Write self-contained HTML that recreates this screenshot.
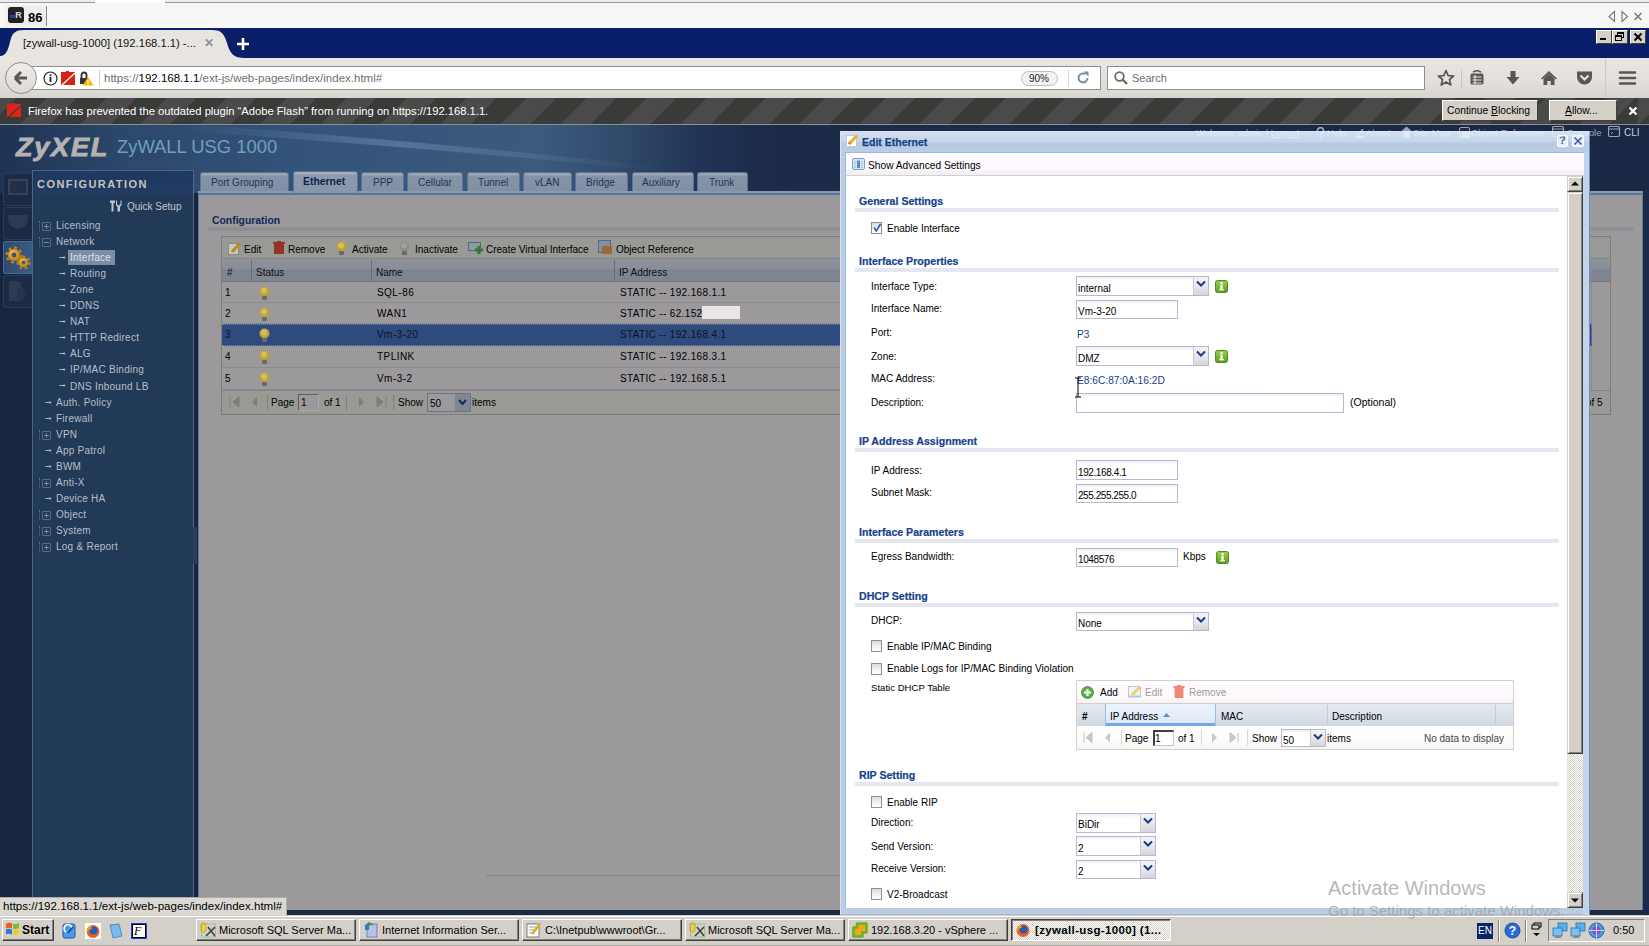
<!DOCTYPE html>
<html><head><meta charset="utf-8">
<style>
*{margin:0;padding:0;box-sizing:border-box}
html,body{width:1649px;height:946px;overflow:hidden;background:#9c999c;font-family:"Liberation Sans",sans-serif;font-size:11px;color:#000}
.a{position:absolute}
.t{position:absolute;white-space:nowrap;line-height:1}
</style></head><body>
<!-- ===== top strip ===== -->
<div class="a" style="left:0;top:0;width:1649px;height:28px;background:#f7f7f7"></div>
<div class="a" style="left:0;top:0;width:1649px;height:3px;background:#ececec;border-bottom:1px solid #9a9a9a"></div>
<div class="a" style="left:95px;top:0;width:70px;height:3px;background:#fff"></div>
<div class="a" style="left:5px;top:5px;width:41px;height:21px;background:#efefef"></div>
<div class="a" style="left:8px;top:7px;width:16px;height:16px;background:#222;border-radius:3px"></div>
<div class="t" style="left:10px;top:11px;font-size:9px;font-weight:bold;color:#ddd"><span style="color:#2b5fd0;font-size:6px">m</span>R</div>
<div class="t" style="left:28px;top:11px;font-size:13px;color:#000;font-weight:bold">86</div>
<div class="a" style="left:46px;top:6px;width:1px;height:20px;background:#888"></div>
<svg class="a" style="left:1606px;top:10px" width="42" height="13"><path d="M8.5,1.5V11.5L3,6.5Z" fill="none" stroke="#777" stroke-width="1.1"/><path d="M16,1.5V11.5L21.5,6.5Z" fill="none" stroke="#777" stroke-width="1.1"/><path d="M28.5,3L35.5,10M35.5,3L28.5,10" stroke="#777" stroke-width="1.5"/></svg>
<!-- ===== firefox tab strip ===== -->
<div class="a" style="left:0;top:28px;width:1649px;height:30px;background:#0a1f6a"></div>
<svg class="a" style="left:0;top:28px" width="245" height="31"><path d="M0,31 L0,28 C6,28 8,22 10,14 C12,5 15,2 24,2 L212,2 C222,2 224,6 227,15 C230,26 234,30 245,30 L245,31 Z" fill="#e8e5e1"/></svg>
<div class="t" style="left:23px;top:38px;font-size:11.2px;color:#111">[zywall-usg-1000] (192.168.1.1) -...</div>
<div class="t" style="left:204px;top:37px;font-size:12px;font-weight:bold;color:#8a9096">&#10005;</div>
<svg class="a" style="left:236px;top:37px" width="14" height="14"><path d="M7,1V13M1,7H13" stroke="#fff" stroke-width="2.6"/></svg>
<!-- window buttons -->
<div class="a" style="left:1596px;top:30px;width:16px;height:14px;background:#d4d0c8;border:1px solid;border-color:#fff #404040 #404040 #fff"></div>
<div class="a" style="left:1600px;top:38px;width:6px;height:2px;background:#000"></div>
<div class="a" style="left:1612px;top:30px;width:16px;height:14px;background:#d4d0c8;border:1px solid;border-color:#fff #404040 #404040 #fff"></div>
<div class="a" style="left:1617px;top:32px;width:7px;height:6px;border:1px solid #000;border-top-width:2px"></div>
<div class="a" style="left:1615px;top:35px;width:7px;height:6px;border:1px solid #000;border-top-width:2px;background:#d4d0c8"></div>
<div class="a" style="left:1630px;top:30px;width:16px;height:14px;background:#d4d0c8;border:1px solid;border-color:#fff #404040 #404040 #fff"></div>
<svg class="a" style="left:1630px;top:30px" width="16" height="14"><path d="M4.5,3.5L11.5,10.5M11.5,3.5L4.5,10.5" stroke="#000" stroke-width="2"/></svg>
<!-- ===== toolbar ===== -->
<div class="a" style="left:0;top:58px;width:1649px;height:40px;background:linear-gradient(#e9e6e2,#e3dfda 60%,#d8d5d0)"></div>
<div class="a" style="left:1605px;top:58px;width:1px;height:40px;background:#cfccc7"></div>
<!-- url field -->
<div class="a" style="left:30px;top:66px;width:1071px;height:24px;background:#fff;border:1px solid #8e8e8e;border-radius:0"></div>
<div class="a" style="left:5px;top:62px;width:32px;height:32px;border-radius:50%;background:linear-gradient(#f0eeea,#dcd9d4);border:1px solid #8f8f8f"></div>
<svg class="a" style="left:13px;top:70px" width="16" height="16"><path d="M2,8 L8,2 M2,8 L8,14 M2,8 H14" stroke="#5a574f" stroke-width="3" fill="none"/></svg>
<svg class="a" style="left:43px;top:71px" width="15" height="15"><circle cx="7.5" cy="7.5" r="6.5" stroke="#222" stroke-width="1.2" fill="#fff"/><rect x="6.6" y="6" width="1.8" height="5" fill="#222"/><rect x="6.6" y="3.3" width="1.8" height="1.8" fill="#222"/></svg>
<svg class="a" style="left:61px;top:71px" width="15" height="14"><path d="M0,1H5V0H8V1H14V14H0Z" fill="#d92115"/><path d="M1,14L14,2" stroke="#fff" stroke-width="1.3"/></svg>
<svg class="a" style="left:79px;top:70px" width="15" height="16"><path d="M1,8V14H9V8Z" fill="#333"/><path d="M2.5,8V5A2.5,2.5 0 0 1 7.5,5V8" stroke="#333" stroke-width="1.8" fill="none"/><path d="M9,7L14.5,15.5H3.5Z" fill="#fbb600"/><rect x="8.4" y="10" width="1.2" height="3" fill="#fff"/><rect x="8.4" y="13.6" width="1.2" height="1" fill="#fff"/></svg>
<div class="a" style="left:99px;top:70px;width:1px;height:16px;background:#ccc"></div>
<div class="t" style="left:104px;top:73px;font-size:11.5px;color:#6f6f6f">https://<span style="color:#000">192.168.1.1</span>/ext-js/web-pages/index/index.html#</div>
<div class="a" style="left:1021px;top:71px;width:37px;height:15px;border:1px solid #bdbdbd;border-radius:8px;background:#f3f3f3"></div>
<div class="t" style="left:1029px;top:74px;font-size:10px;color:#222">90%</div>
<div class="a" style="left:1068px;top:70px;width:1px;height:17px;background:#d5d5d5"></div>
<svg class="a" style="left:1075px;top:70px" width="16" height="16"><path d="M12.5,8A4.5,4.5 0 1 1 10.5,4.2" stroke="#7890a4" stroke-width="2" fill="none"/><path d="M8.5,1.5H13.5V6.5Z" fill="#7890a4"/></svg>
<!-- search -->
<div class="a" style="left:1107px;top:66px;width:318px;height:24px;background:#fff;border:1px solid #8e8e8e;border-radius:0"></div>
<svg class="a" style="left:1113px;top:70px" width="16" height="16"><circle cx="6.5" cy="6.5" r="4.3" stroke="#6a6a6a" stroke-width="1.8" fill="none"/><path d="M9.5,9.5L14,14" stroke="#6a6a6a" stroke-width="2.4"/></svg>
<div class="t" style="left:1132px;top:73px;font-size:11px;color:#6d6d6d">Search</div>
<!-- toolbar icons -->
<svg class="a" style="left:1437px;top:69px" width="18" height="18"><path d="M9,1.5L11.2,6.6L16.6,7L12.5,10.5L13.8,16L9,13L4.2,16L5.5,10.5L1.4,7L6.8,6.6Z" stroke="#595750" stroke-width="1.7" fill="none" stroke-linejoin="round"/></svg>
<div class="a" style="left:1461px;top:70px;width:1px;height:17px;background:#c9c6c1"></div>
<svg class="a" style="left:1469px;top:70px" width="16" height="16"><rect x="1.5" y="3.5" width="13" height="11" rx="1.5" fill="#595750"/><path d="M4,2L8,0.5L12,2" stroke="#595750" stroke-width="1.5" fill="none"/><path d="M3.5,7H12.5M3.5,10H12.5M3.5,13H12.5M6,5V14" stroke="#e6e3df" stroke-width="1.2"/></svg>
<svg class="a" style="left:1505px;top:70px" width="16" height="16"><path d="M5.5,1H10.5V7H14.5L8,14.5L1.5,7H5.5Z" fill="#595750"/></svg>
<svg class="a" style="left:1540px;top:70px" width="18" height="16"><path d="M9,1L17,8.5L15.8,9.6L9,3.4L2.2,9.6L1,8.5Z" fill="#595750"/><path d="M3.5,8.5L9,3.8L14.5,8.5V15H10.7V11H7.3V15H3.5Z" fill="#595750"/></svg>
<svg class="a" style="left:1576px;top:70px" width="17" height="16"><path d="M1,1.5H16V7A7.5,7.5 0 0 1 1,7Z" fill="#595750"/><path d="M4.5,5.5L8.5,9.5L12.5,5.5" stroke="#e6e3df" stroke-width="2.2" fill="none"/></svg>
<svg class="a" style="left:1618px;top:70px" width="19" height="16"><path d="M2,2.5H17M2,8H17M2,13.5H17" stroke="#595750" stroke-width="2.6" stroke-linecap="round"/></svg>
<!-- ===== notification bar ===== -->
<div class="a" style="left:0;top:98px;width:1649px;height:27px;background:repeating-linear-gradient(-45deg,#393b38 0 21.19px,#4a4a4a 21.19px 42.38px) -11px 0"></div>
<div class="a" style="left:0;top:124px;width:1649px;height:1px;background:#8d8f92"></div>
<svg class="a" style="left:7px;top:103px" width="15" height="15"><path d="M0,1H5V0H8V1H14V14H0Z" fill="#e0231a"/><path d="M1,14.5L14,2.5" stroke="#3d3e3c" stroke-width="1.3"/></svg>
<div class="t" style="left:28px;top:106px;font-size:11.2px;color:#fff">Firefox has prevented the outdated plugin “Adobe Flash” from running on https://192.168.1.1.</div>
<div class="a" style="left:1442px;top:100px;width:96px;height:21px;background:#d4d0c8;border:1px solid;border-color:#fff #404040 #404040 #fff"></div>
<div class="t" style="left:1447px;top:106px;font-size:10.3px;color:#000">Continue <u>B</u>locking</div>
<div class="a" style="left:1549px;top:100px;width:68px;height:21px;background:#d4d0c8;border:1px solid;border-color:#fff #404040 #404040 #fff"></div>
<div class="t" style="left:1565px;top:106px;font-size:10.3px;color:#000"><u>A</u>llow...</div>
<svg class="a" style="left:1628px;top:106px" width="10" height="10"><path d="M1.5,1.5L8.5,8.5M8.5,1.5L1.5,8.5" stroke="#fff" stroke-width="2.4"/></svg>
<!-- ===== zyxel page ===== -->
<div class="a" style="left:0;top:125px;width:1649px;height:790px;background:#1b2a47"></div>
<!-- header gradient -->
<div class="a" style="left:0;top:125px;width:1649px;height:68px;background:linear-gradient(90deg,#1f3353 0px,#2b476a 120px,#34537a 300px,#3c5a7d 540px,#304a6b 620px,#22365a 690px,#1c2b49 760px,#1a2846 1649px)"></div>
<svg class="a" style="left:0;top:125px" width="900" height="68"><defs><linearGradient id="sw" x1="0" y1="0" x2="1" y2="0"><stop offset="0" stop-color="#8fb0d0" stop-opacity="0"/><stop offset="0.45" stop-color="#9ab8d6" stop-opacity="0.3"/><stop offset="1" stop-color="#8fb0d0" stop-opacity="0"/></linearGradient></defs><path d="M200,0 C340,10 500,24 660,42 L660,46 C500,30 340,16 180,6 Z" fill="url(#sw)"/></svg>
<div class="t" style="left:16px;top:134px;font-size:27px;font-weight:bold;font-style:italic;color:#b4b3b1;letter-spacing:1.8px;-webkit-text-stroke:0.9px #b4b3b1;transform:scaleY(0.93);transform-origin:0 100%">ZyXEL</div>
<div class="t" style="left:117px;top:138px;font-size:18.4px;color:#70a0b9">ZyWALL USG 1000</div>
<!-- left icon strip -->
<div class="a" style="left:0;top:193px;width:32px;height:717px;background:#172640"></div>
<div class="a" style="left:3px;top:173px;width:29px;height:33px;background:#1d2a46;border:1px solid #2c3b57;border-right:0;border-radius:3px 0 0 3px"></div>
<div class="a" style="left:8px;top:179px;width:20px;height:16px;border:2px solid #34435c;background:#232f48"></div>
<div class="a" style="left:3px;top:207px;width:29px;height:33px;background:#1d2a46;border:1px solid #2c3b57;border-right:0;border-radius:3px 0 0 3px"></div>
<div class="a" style="left:8px;top:215px;width:20px;height:14px;border-radius:0 0 10px 10px;background:#2c3a52"></div>
<div class="a" style="left:3px;top:241px;width:30px;height:33px;background:linear-gradient(90deg,#2f4a70,#3b5b84);border:1px solid #4d6a90;border-right:0;border-radius:3px 0 0 3px"></div>
<svg class="a" style="left:4px;top:245px" width="28" height="26"><defs><radialGradient id="gg" cx="0.4" cy="0.35" r="0.7"><stop offset="0" stop-color="#f2c24a"/><stop offset="1" stop-color="#b27a18"/></radialGradient></defs><circle cx="10" cy="10" r="6.8" fill="none" stroke="#c08a20" stroke-width="3.2" stroke-dasharray="2.6 2.74"/><circle cx="10" cy="10" r="6.2" fill="url(#gg)" stroke="#8a5a10" stroke-width="0.6"/><circle cx="10" cy="10" r="2.4" fill="#35527a"/><circle cx="19.5" cy="17.5" r="5.6" fill="none" stroke="#c08a20" stroke-width="2.8" stroke-dasharray="2.3 2.7"/><circle cx="19.5" cy="17.5" r="5" fill="url(#gg)" stroke="#8a5a10" stroke-width="0.6"/><circle cx="19.5" cy="17.5" r="1.9" fill="#3a5a84"/></svg>
<div class="a" style="left:3px;top:275px;width:29px;height:33px;background:#1d2a46;border:1px solid #2c3b57;border-right:0;border-radius:3px 0 0 3px"></div>
<div class="a" style="left:9px;top:281px;width:12px;height:20px;background:#2c3a52;border-radius:3px 3px 0 0"></div>
<div class="a" style="left:17px;top:288px;width:9px;height:12px;background:#26334b;border-radius:0 5px 5px 0"></div>
<!-- sidebar panel -->
<div class="a" style="left:32px;top:170px;width:162px;height:740px;background:#213a58;border-left:1px solid #526382;border-top:1px solid #526382"></div>
<div class="a" style="left:33px;top:171px;width:160px;height:24px;background:linear-gradient(#1e3a62,#1f3a62 50%,#243b60)"></div>
<div class="a" style="left:193px;top:170px;width:1px;height:740px;background:#56688a"></div>
<div class="a" style="left:194px;top:193px;width:4px;height:717px;background:#172541"></div>
<div class="a" style="left:193px;top:527px;width:4px;height:37px;background:#2a3d5a"></div>
<div class="t" style="left:37px;top:179px;font-size:11px;font-weight:bold;color:#c9c3bb;letter-spacing:1.45px">CONFIGURATION</div>
<svg class="a" style="left:109px;top:200px" width="13" height="12"><path d="M1,0.5H6V3H4.5V11.5H2.5V3H1Z M8,0.5V4L9.5,5.5H10L11.5,4V0.5H12.5V5L11,7V11.5H8.5V7L7,5V0.5Z" fill="#c2c6cb"/></svg>
<div class="t" style="left:127px;top:202px;font-size:10px;color:#c2c6cb">Quick Setup</div>
<!--S:tree-->
<div class="a" style="left:39px;top:221px;width:1px;height:10px;border-left:1px dotted #5a7090"></div>
<div class="a" style="left:42px;top:222px;width:9px;height:9px;border:1px solid #536a8a;border-radius:1px"></div>
<div class="a" style="left:44px;top:226px;width:5px;height:1px;background:#75899f"></div>
<div class="a" style="left:46px;top:224px;width:1px;height:5px;background:#75899f"></div>
<div class="t" style="left:56px;top:221px;font-size:10px;letter-spacing:0.25px;color:#b9bec6">Licensing</div>
<div class="a" style="left:39px;top:237px;width:1px;height:10px;border-left:1px dotted #5a7090"></div>
<div class="a" style="left:42px;top:238px;width:9px;height:9px;border:1px solid #536a8a;border-radius:1px"></div>
<div class="a" style="left:44px;top:242px;width:5px;height:1px;background:#75899f"></div>
<div class="t" style="left:56px;top:237px;font-size:10px;letter-spacing:0.25px;color:#b9bec6">Network</div>
<div class="t" style="left:59px;top:254px;font-size:8px;color:#aab4c2">&#10142;</div>
<div class="a" style="left:68px;top:250px;width:47px;height:15px;background:#7a8ca6"></div>
<div class="t" style="left:70px;top:253px;font-size:10px;letter-spacing:0.25px;color:#dde0e4">Interface</div>
<div class="t" style="left:59px;top:270px;font-size:8px;color:#aab4c2">&#10142;</div>
<div class="t" style="left:70px;top:269px;font-size:10px;letter-spacing:0.25px;color:#b9bec6">Routing</div>
<div class="t" style="left:59px;top:286px;font-size:8px;color:#aab4c2">&#10142;</div>
<div class="t" style="left:70px;top:285px;font-size:10px;letter-spacing:0.25px;color:#b9bec6">Zone</div>
<div class="t" style="left:59px;top:302px;font-size:8px;color:#aab4c2">&#10142;</div>
<div class="t" style="left:70px;top:301px;font-size:10px;letter-spacing:0.25px;color:#b9bec6">DDNS</div>
<div class="t" style="left:59px;top:318px;font-size:8px;color:#aab4c2">&#10142;</div>
<div class="t" style="left:70px;top:317px;font-size:10px;letter-spacing:0.25px;color:#b9bec6">NAT</div>
<div class="t" style="left:59px;top:334px;font-size:8px;color:#aab4c2">&#10142;</div>
<div class="t" style="left:70px;top:333px;font-size:10px;letter-spacing:0.25px;color:#b9bec6">HTTP Redirect</div>
<div class="t" style="left:59px;top:350px;font-size:8px;color:#aab4c2">&#10142;</div>
<div class="t" style="left:70px;top:349px;font-size:10px;letter-spacing:0.25px;color:#b9bec6">ALG</div>
<div class="t" style="left:59px;top:366px;font-size:8px;color:#aab4c2">&#10142;</div>
<div class="t" style="left:70px;top:365px;font-size:10px;letter-spacing:0.25px;color:#b9bec6">IP/MAC Binding</div>
<div class="t" style="left:59px;top:382px;font-size:8px;color:#aab4c2">&#10142;</div>
<div class="t" style="left:70px;top:382px;font-size:10px;letter-spacing:0.25px;color:#b9bec6">DNS Inbound LB</div>
<div class="t" style="left:45px;top:399px;font-size:8px;color:#aab4c2">&#10142;</div>
<div class="t" style="left:56px;top:398px;font-size:10px;letter-spacing:0.25px;color:#b9bec6">Auth. Policy</div>
<div class="t" style="left:45px;top:415px;font-size:8px;color:#aab4c2">&#10142;</div>
<div class="t" style="left:56px;top:414px;font-size:10px;letter-spacing:0.25px;color:#b9bec6">Firewall</div>
<div class="a" style="left:39px;top:430px;width:1px;height:10px;border-left:1px dotted #5a7090"></div>
<div class="a" style="left:42px;top:431px;width:9px;height:9px;border:1px solid #536a8a;border-radius:1px"></div>
<div class="a" style="left:44px;top:435px;width:5px;height:1px;background:#75899f"></div>
<div class="a" style="left:46px;top:433px;width:1px;height:5px;background:#75899f"></div>
<div class="t" style="left:56px;top:430px;font-size:10px;letter-spacing:0.25px;color:#b9bec6">VPN</div>
<div class="t" style="left:45px;top:447px;font-size:8px;color:#aab4c2">&#10142;</div>
<div class="t" style="left:56px;top:446px;font-size:10px;letter-spacing:0.25px;color:#b9bec6">App Patrol</div>
<div class="t" style="left:45px;top:463px;font-size:8px;color:#aab4c2">&#10142;</div>
<div class="t" style="left:56px;top:462px;font-size:10px;letter-spacing:0.25px;color:#b9bec6">BWM</div>
<div class="a" style="left:39px;top:478px;width:1px;height:10px;border-left:1px dotted #5a7090"></div>
<div class="a" style="left:42px;top:479px;width:9px;height:9px;border:1px solid #536a8a;border-radius:1px"></div>
<div class="a" style="left:44px;top:483px;width:5px;height:1px;background:#75899f"></div>
<div class="a" style="left:46px;top:481px;width:1px;height:5px;background:#75899f"></div>
<div class="t" style="left:56px;top:478px;font-size:10px;letter-spacing:0.25px;color:#b9bec6">Anti-X</div>
<div class="t" style="left:45px;top:495px;font-size:8px;color:#aab4c2">&#10142;</div>
<div class="t" style="left:56px;top:494px;font-size:10px;letter-spacing:0.25px;color:#b9bec6">Device HA</div>
<div class="a" style="left:39px;top:510px;width:1px;height:10px;border-left:1px dotted #5a7090"></div>
<div class="a" style="left:42px;top:511px;width:9px;height:9px;border:1px solid #536a8a;border-radius:1px"></div>
<div class="a" style="left:44px;top:515px;width:5px;height:1px;background:#75899f"></div>
<div class="a" style="left:46px;top:513px;width:1px;height:5px;background:#75899f"></div>
<div class="t" style="left:56px;top:510px;font-size:10px;letter-spacing:0.25px;color:#b9bec6">Object</div>
<div class="a" style="left:39px;top:526px;width:1px;height:10px;border-left:1px dotted #5a7090"></div>
<div class="a" style="left:42px;top:527px;width:9px;height:9px;border:1px solid #536a8a;border-radius:1px"></div>
<div class="a" style="left:44px;top:531px;width:5px;height:1px;background:#75899f"></div>
<div class="a" style="left:46px;top:529px;width:1px;height:5px;background:#75899f"></div>
<div class="t" style="left:56px;top:526px;font-size:10px;letter-spacing:0.25px;color:#b9bec6">System</div>
<div class="a" style="left:39px;top:542px;width:1px;height:10px;border-left:1px dotted #5a7090"></div>
<div class="a" style="left:42px;top:543px;width:9px;height:9px;border:1px solid #536a8a;border-radius:1px"></div>
<div class="a" style="left:44px;top:547px;width:5px;height:1px;background:#75899f"></div>
<div class="a" style="left:46px;top:545px;width:1px;height:5px;background:#75899f"></div>
<div class="t" style="left:56px;top:542px;font-size:10px;letter-spacing:0.25px;color:#b9bec6">Log &amp; Report</div>
<!--E:tree-->
<!-- content panel -->
<div class="a" style="left:198px;top:194px;width:1445px;height:716px;background:#9c999c;border-top:1px solid #5a77a0;border-left:1px solid #5c7aa4"></div>
<div class="a" style="left:1642px;top:193px;width:1px;height:717px;background:#5c7aa4"></div>
<!--S:tabs-->
<div class="a" style="left:198px;top:191px;width:1445px;height:3px;background:#8899ad;border-bottom:1px solid #5a77a0"></div>
<div class="a" style="left:200px;top:172px;width:89px;height:19px;background:linear-gradient(#9ca6b3 0,#9ca6b3 2px,#8593a6 3px,#8190a3);border:1px solid #5b7399;border-bottom:0;border-radius:3px 3px 0 0"></div>
<div class="t" style="left:211px;top:178px;font-size:10px;color:#1f3559">Port Grouping</div>
<div class="a" style="left:293px;top:171px;width:65px;height:22px;background:linear-gradient(#a4aebb 0,#a4aebb 2px,#8b9aad 3px,#8796aa);border:1px solid #5b7399;border-bottom:0;border-radius:3px 3px 0 0"></div>
<div class="t" style="left:303px;top:177px;font-size:10.4px;font-weight:bold;color:#0f2448">Ethernet</div>
<div class="a" style="left:361px;top:172px;width:43px;height:19px;background:linear-gradient(#9ca6b3 0,#9ca6b3 2px,#8593a6 3px,#8190a3);border:1px solid #5b7399;border-bottom:0;border-radius:3px 3px 0 0"></div>
<div class="t" style="left:373px;top:178px;font-size:10px;color:#1f3559">PPP</div>
<div class="a" style="left:407px;top:172px;width:56px;height:19px;background:linear-gradient(#9ca6b3 0,#9ca6b3 2px,#8593a6 3px,#8190a3);border:1px solid #5b7399;border-bottom:0;border-radius:3px 3px 0 0"></div>
<div class="t" style="left:418px;top:178px;font-size:10px;color:#1f3559">Cellular</div>
<div class="a" style="left:467px;top:172px;width:53px;height:19px;background:linear-gradient(#9ca6b3 0,#9ca6b3 2px,#8593a6 3px,#8190a3);border:1px solid #5b7399;border-bottom:0;border-radius:3px 3px 0 0"></div>
<div class="t" style="left:478px;top:178px;font-size:10px;color:#1f3559">Tunnel</div>
<div class="a" style="left:523px;top:172px;width:49px;height:19px;background:linear-gradient(#9ca6b3 0,#9ca6b3 2px,#8593a6 3px,#8190a3);border:1px solid #5b7399;border-bottom:0;border-radius:3px 3px 0 0"></div>
<div class="t" style="left:535px;top:178px;font-size:10px;color:#1f3559">vLAN</div>
<div class="a" style="left:575px;top:172px;width:53px;height:19px;background:linear-gradient(#9ca6b3 0,#9ca6b3 2px,#8593a6 3px,#8190a3);border:1px solid #5b7399;border-bottom:0;border-radius:3px 3px 0 0"></div>
<div class="t" style="left:586px;top:178px;font-size:10px;color:#1f3559">Bridge</div>
<div class="a" style="left:632px;top:172px;width:62px;height:19px;background:linear-gradient(#9ca6b3 0,#9ca6b3 2px,#8593a6 3px,#8190a3);border:1px solid #5b7399;border-bottom:0;border-radius:3px 3px 0 0"></div>
<div class="t" style="left:642px;top:178px;font-size:10px;color:#1f3559">Auxiliary</div>
<div class="a" style="left:697px;top:172px;width:51px;height:19px;background:linear-gradient(#9ca6b3 0,#9ca6b3 2px,#8593a6 3px,#8190a3);border:1px solid #5b7399;border-bottom:0;border-radius:3px 3px 0 0"></div>
<div class="t" style="left:709px;top:178px;font-size:10px;color:#1f3559">Trunk</div>
<!--E:tabs-->
<div class="t" style="left:212px;top:216px;font-size:10.4px;font-weight:bold;color:#0f2a58">Configuration</div>
<div class="a" style="left:208px;top:227px;width:1426px;height:4px;background:#8c9092"></div>
<!--S:grid-->
<div class="a" style="left:221px;top:236px;width:1390px;height:179px;background:#9c999c;border:1px solid #7e7d7c"></div>
<div class="a" style="left:222px;top:237px;width:1388px;height:22px;background:#999a95;border-bottom:1px solid #858683"></div>
<svg class="a" style="left:228px;top:241px" width="14" height="14"><rect x="0.5" y="2.5" width="10" height="11" fill="#c9c7c4" stroke="#8a8a88"/><path d="M4,11L12,2" stroke="#c28a18" stroke-width="3"/></svg>
<div class="t" style="left:244px;top:245px;font-size:10px">Edit</div>
<svg class="a" style="left:273px;top:241px" width="12" height="14"><rect x="1" y="3" width="10" height="10" rx="1" fill="#94331f"/><rect x="0" y="1" width="12" height="2" fill="#94331f"/><rect x="4" y="0" width="4" height="2" fill="#94331f"/></svg>
<div class="t" style="left:288px;top:245px;font-size:10px">Remove</div>
<svg class="a" style="left:336px;top:241px" width="11" height="15"><circle cx="5.5" cy="5.5" r="5" fill="#bda13a"/><circle cx="5" cy="4.5" r="3" fill="#d6c055"/><rect x="3" y="10" width="5" height="4" rx="1" fill="#6a6a66"/></svg>
<div class="t" style="left:352px;top:245px;font-size:10px">Activate</div>
<svg class="a" style="left:399px;top:241px" width="11" height="15"><circle cx="5.5" cy="5.5" r="5" fill="#8c8c8a"/><circle cx="5" cy="4.5" r="3" fill="#a0a09e"/><rect x="3" y="10" width="5" height="4" rx="1" fill="#6a6a66"/></svg>
<div class="t" style="left:415px;top:245px;font-size:10px">Inactivate</div>
<svg class="a" style="left:468px;top:241px" width="16" height="14"><rect x="0.5" y="1.5" width="12" height="8" fill="#8c9aa6" stroke="#5a6a78"/><path d="M11,5V13M7,9H15" stroke="#2f7a2a" stroke-width="3"/></svg>
<div class="t" style="left:486px;top:245px;font-size:10px">Create Virtual Interface</div>
<svg class="a" style="left:598px;top:240px" width="15" height="15"><rect x="0.5" y="0.5" width="12" height="12" fill="#7f93a8" stroke="#55687c"/><rect x="4" y="6" width="10" height="8" rx="1" fill="#9a6a30"/></svg>
<div class="t" style="left:616px;top:245px;font-size:10px">Object Reference</div>
<div class="a" style="left:222px;top:259px;width:1388px;height:23px;background:linear-gradient(#8d929b,#888e98 45%,#7d8490 50%,#80868f);border-bottom:1px solid #6f7580"></div>
<div class="a" style="left:1591px;top:260px;width:1px;height:130px;background:#8c8a8c"></div>
<div class="a" style="left:251px;top:260px;width:1px;height:21px;background:#5f6d85"></div>
<div class="a" style="left:371px;top:260px;width:1px;height:21px;background:#5f6d85"></div>
<div class="a" style="left:614px;top:260px;width:1px;height:21px;background:#5f6d85"></div>
<div class="t" style="left:227px;top:268px;font-size:10px;color:#111">#</div>
<div class="t" style="left:256px;top:268px;font-size:10px;color:#111">Status</div>
<div class="t" style="left:376px;top:268px;font-size:10px;color:#111">Name</div>
<div class="t" style="left:619px;top:268px;font-size:10px;color:#111">IP Address</div>
<div class="a" style="left:222px;top:302px;width:1370px;height:1px;background:#8c8a8c"></div>
<div class="t" style="left:225px;top:288px;font-size:10px;color:#000">1</div>
<svg class="a" style="left:259px;top:286px" width="11" height="15"><circle cx="5.5" cy="5.5" r="5" fill="#bda13a"/><circle cx="5" cy="4.5" r="3" fill="#d6c055"/><rect x="3" y="10" width="5" height="4" rx="1" fill="#6a6a66"/></svg>
<div class="t" style="left:377px;top:288px;font-size:10px;letter-spacing:0.45px;color:#000">SQL-86</div>
<div class="t" style="left:620px;top:288px;font-size:10px;letter-spacing:0.35px;color:#000">STATIC -- 192.168.1.1</div>
<div class="a" style="left:222px;top:323px;width:1370px;height:1px;background:#8c8a8c"></div>
<div class="t" style="left:225px;top:309px;font-size:10px;color:#000">2</div>
<svg class="a" style="left:259px;top:307px" width="11" height="15"><circle cx="5.5" cy="5.5" r="5" fill="#bda13a"/><circle cx="5" cy="4.5" r="3" fill="#d6c055"/><rect x="3" y="10" width="5" height="4" rx="1" fill="#6a6a66"/></svg>
<div class="t" style="left:377px;top:309px;font-size:10px;letter-spacing:0.45px;color:#000">WAN1</div>
<div class="t" style="left:620px;top:309px;font-size:10px;letter-spacing:0.35px;color:#000">STATIC -- 62.152</div>
<div class="a" style="left:222px;top:324px;width:1370px;height:22px;background:#2f4b7d;border:1px dotted #6d85aa;border-left:0"></div>
<div class="t" style="left:225px;top:330px;font-size:10px;color:#0b1220">3</div>
<svg class="a" style="left:259px;top:328px" width="11" height="15"><circle cx="5.5" cy="5.5" r="5" fill="#bda13a"/><circle cx="5" cy="4.5" r="3" fill="#d6c055"/><rect x="3" y="10" width="5" height="4" rx="1" fill="#6a6a66"/></svg>
<div class="t" style="left:377px;top:330px;font-size:10px;letter-spacing:0.45px;color:#0b1220">Vm-3-20</div>
<div class="t" style="left:620px;top:330px;font-size:10px;letter-spacing:0.35px;color:#0b1220">STATIC -- 192.168.4.1</div>
<div class="a" style="left:222px;top:367px;width:1370px;height:1px;background:#8c8a8c"></div>
<div class="t" style="left:225px;top:352px;font-size:10px;color:#000">4</div>
<svg class="a" style="left:259px;top:350px" width="11" height="15"><circle cx="5.5" cy="5.5" r="5" fill="#bda13a"/><circle cx="5" cy="4.5" r="3" fill="#d6c055"/><rect x="3" y="10" width="5" height="4" rx="1" fill="#6a6a66"/></svg>
<div class="t" style="left:377px;top:352px;font-size:10px;letter-spacing:0.45px;color:#000">TPLINK</div>
<div class="t" style="left:620px;top:352px;font-size:10px;letter-spacing:0.35px;color:#000">STATIC -- 192.168.3.1</div>
<div class="a" style="left:222px;top:389px;width:1370px;height:1px;background:#8c8a8c"></div>
<div class="t" style="left:225px;top:374px;font-size:10px;color:#000">5</div>
<svg class="a" style="left:259px;top:372px" width="11" height="15"><circle cx="5.5" cy="5.5" r="5" fill="#bda13a"/><circle cx="5" cy="4.5" r="3" fill="#d6c055"/><rect x="3" y="10" width="5" height="4" rx="1" fill="#6a6a66"/></svg>
<div class="t" style="left:377px;top:374px;font-size:10px;letter-spacing:0.45px;color:#000">Vm-3-2</div>
<div class="t" style="left:620px;top:374px;font-size:10px;letter-spacing:0.35px;color:#000">STATIC -- 192.168.5.1</div>
<div class="a" style="left:702px;top:306px;width:38px;height:13px;background:#e8e4e8"></div>
<div class="a" style="left:222px;top:390px;width:1388px;height:24px;background:#999a95;border-top:1px solid #858683"></div>
<svg class="a" style="left:229px;top:396px" width="12" height="12"><path d="M1,1V11M10,1L4,6L10,11Z" stroke="#7c7c7a" fill="#7c7c7a"/></svg>
<svg class="a" style="left:249px;top:396px" width="10" height="12"><path d="M8,1L3,6L8,11Z" fill="#7c7c7a"/></svg>
<div class="a" style="left:267px;top:395px;width:1px;height:15px;background:#7f807c"></div>
<div class="a" style="left:346px;top:395px;width:1px;height:15px;background:#7f807c"></div>
<div class="a" style="left:393px;top:395px;width:1px;height:15px;background:#7f807c"></div>
<div class="t" style="left:271px;top:398px;font-size:10px">Page</div>
<div class="a" style="left:298px;top:394px;width:21px;height:17px;background:#9c999c;border:1px solid #5e5e5e;border-right-color:#aaa;border-bottom-color:#aaa"></div>
<div class="t" style="left:301px;top:398px;font-size:10px">1</div>
<div class="t" style="left:324px;top:398px;font-size:10px">of 1</div>
<svg class="a" style="left:357px;top:396px" width="10" height="12"><path d="M2,1L7,6L2,11Z" fill="#7c7c7a"/></svg>
<svg class="a" style="left:375px;top:396px" width="12" height="12"><path d="M11,1V11M2,1L8,6L2,11Z" stroke="#7c7c7a" fill="#7c7c7a"/></svg>
<div class="t" style="left:398px;top:398px;font-size:10px">Show</div>
<div class="a" style="left:427px;top:393px;width:44px;height:19px;background:#9c999c;border:1px solid #6c7385"></div>
<div class="t" style="left:430px;top:399px;font-size:10px">50</div>
<div class="a" style="left:455px;top:394px;width:15px;height:17px;background:#7f8694"></div>
<svg class="a" style="left:458px;top:399px" width="9" height="7"><path d="M1,1L4.5,5L8,1" stroke="#17285a" stroke-width="2" fill="none"/></svg>
<div class="t" style="left:472px;top:398px;font-size:10px">items</div>
<div class="t" style="left:1586px;top:398px;font-size:10px">of 5</div>
<!--E:grid-->
<div class="a" style="left:487px;top:875px;width:353px;height:1px;border-top:1px dotted #777"></div>
<!-- status url tooltip -->
<div class="a" style="left:0;top:897px;width:287px;height:18px;background:#dcd9d4;border:1px solid #b0aca6;border-left:0;border-bottom:0"></div>
<div class="t" style="left:3px;top:901px;font-size:11.55px;color:#000">https://192.168.1.1/ext-js/web-pages/index/index.html#</div>
<!-- ===== taskbar ===== -->
<!--S:taskbar-->
<div class="a" style="left:0;top:915px;width:1649px;height:31px;background:#d4d0c8;border-top:1px solid #d4d0c8"></div>
<div class="a" style="left:0;top:916px;width:1649px;height:1px;background:#fff"></div>
<div class="a" style="left:0;top:945px;width:1649px;height:1px;background:#a8a49c"></div>
<div class="a" style="left:2px;top:919px;width:52px;height:22px;background:#d4d0c8;border:1px solid;border-color:#fff #404040 #404040 #fff;box-shadow:inset -1px -1px #808080"></div>
<svg class="a" style="left:5px;top:922px" width="15" height="14"><path d="M1,2Q4,0 7,1.5V6.5Q4,5 1,6.5Z" fill="#f25a1f"/><path d="M8,1.5Q11,3 14,1V6Q11,7.5 8,6.5Z" fill="#7bbd2a"/><path d="M1,7.5Q4,6 7,7.5V12.5Q4,11 1,12.5Z" fill="#2e7ad6"/><path d="M8,7.5Q11,9 14,7V12Q11,13.5 8,12.5Z" fill="#f7c61c"/></svg>
<div class="t" style="left:22px;top:924px;font-size:12px;font-weight:bold;color:#000">Start</div>
<svg class="a" style="left:62px;top:923px" width="15" height="16"><rect x="1" y="1" width="12" height="14" rx="2" fill="#4a9ae8" stroke="#1a5ab8"/><path d="M4,9A4,4 0 1 1 10,5" stroke="#fff" stroke-width="1.6" fill="none"/><path d="M6,10L11,4" stroke="#1a3a8a" stroke-width="1.4"/></svg>
<div class="a" style="left:85px;top:923px;width:16px;height:16px;background:#fff"></div>
<svg class="a" style="left:85px;top:923px" width="16" height="16"><circle cx="8" cy="8.5" r="6.5" fill="#e8601c"/><circle cx="8.5" cy="7.5" r="4" fill="#2a5ab8"/><path d="M2,7Q3,2 8,2Q5,4 7,6Q3,6 2,10Z" fill="#f0a020"/></svg>
<svg class="a" style="left:109px;top:923px" width="14" height="16"><path d="M1,2L10,1L13,13L4,15Z" fill="#7ab8f0" stroke="#3a80c8" stroke-width="0.8"/><path d="M2,2L10,1.2" stroke="#8a8a60" stroke-width="1.2" stroke-dasharray="1,1"/></svg>
<div class="a" style="left:131px;top:923px;width:16px;height:16px;border:1px solid #1a3ae8;background:#fff;box-shadow:inset 0 0 0 1px #000"></div>
<div class="t" style="left:134px;top:925px;font-size:12px;font-family:'Liberation Serif';font-style:italic;color:#000">F</div>
<div class="a" style="left:196px;top:919px;width:160px;height:22px;background:#d4d0c8;border:1px solid;border-color:#fff #404040 #404040 #fff;box-shadow:inset -1px -1px #808080"></div>
<div class="t" style="left:219px;top:925px;font-size:11px;color:#000">Microsoft SQL Server Ma...</div>
<div class="a" style="left:359px;top:919px;width:160px;height:22px;background:#d4d0c8;border:1px solid;border-color:#fff #404040 #404040 #fff;box-shadow:inset -1px -1px #808080"></div>
<div class="t" style="left:382px;top:925px;font-size:11px;color:#000">Internet Information Ser...</div>
<div class="a" style="left:522px;top:919px;width:160px;height:22px;background:#d4d0c8;border:1px solid;border-color:#fff #404040 #404040 #fff;box-shadow:inset -1px -1px #808080"></div>
<div class="t" style="left:545px;top:925px;font-size:11px;color:#000">C:\Inetpub\wwwroot\Gr...</div>
<div class="a" style="left:685px;top:919px;width:160px;height:22px;background:#d4d0c8;border:1px solid;border-color:#fff #404040 #404040 #fff;box-shadow:inset -1px -1px #808080"></div>
<div class="t" style="left:708px;top:925px;font-size:11px;color:#000">Microsoft SQL Server Ma...</div>
<div class="a" style="left:848px;top:919px;width:160px;height:22px;background:#d4d0c8;border:1px solid;border-color:#fff #404040 #404040 #fff;box-shadow:inset -1px -1px #808080"></div>
<div class="t" style="left:871px;top:925px;font-size:11px;color:#000">192.168.3.20 - vSphere ...</div>
<div class="a" style="left:1011px;top:919px;width:160px;height:22px;background:repeating-conic-gradient(#fff 0 25%,#d4d0c8 0 50%) 0 0/2px 2px;border:1px solid;border-color:#404040 #fff #fff #404040;box-shadow:inset 1px 1px #808080"></div>
<div class="t" style="left:1035px;top:925px;font-size:11.5px;font-weight:bold;letter-spacing:0.35px;color:#000">[zywall-usg-1000] (1...</div>
<svg class="a" style="left:200px;top:922px" width="17" height="16"><rect x="1" y="1" width="5" height="9" rx="2" fill="#f0d040" stroke="#b09010" stroke-width="0.6"/><path d="M6,14L15,5M8,5L15,14" stroke="#444" stroke-width="1.6"/><rect x="1.5" y="2" width="14" height="13" fill="none" stroke="#4ab04a" stroke-dasharray="1,1" stroke-width="0.8"/></svg>
<svg class="a" style="left:363px;top:921px" width="16" height="17"><rect x="4" y="3" width="10" height="13" fill="#b8c0e8" stroke="#6070b0" stroke-width="0.8"/><path d="M1,5L6,1L11,4" fill="#3a9a3a"/><rect x="2" y="4" width="4" height="5" fill="#3a70d8"/></svg>
<svg class="a" style="left:526px;top:921px" width="16" height="17"><rect x="1" y="3" width="12" height="13" fill="#fff" stroke="#606060" stroke-width="0.8"/><path d="M3,6H11M3,9H11M3,12H9" stroke="#888" stroke-width="0.8"/><path d="M6,13L14,3" stroke="#d8b020" stroke-width="2.4"/></svg>
<svg class="a" style="left:689px;top:922px" width="17" height="16"><rect x="1" y="1" width="5" height="9" rx="2" fill="#f0d040" stroke="#b09010" stroke-width="0.6"/><path d="M6,14L15,5M8,5L15,14" stroke="#444" stroke-width="1.6"/><rect x="1.5" y="2" width="14" height="13" fill="none" stroke="#4ab04a" stroke-dasharray="1,1" stroke-width="0.8"/></svg>
<svg class="a" style="left:852px;top:922px" width="16" height="16"><path d="M5,1.5H14.5V10.5H10.5V14.5H1.5V5.5H5Z" fill="#f0a818" stroke="#6ab02a" stroke-width="2.6" stroke-linejoin="round"/></svg>
<svg class="a" style="left:1015px;top:922px" width="16" height="16"><circle cx="8" cy="8.5" r="6.5" fill="#e8601c"/><circle cx="8.5" cy="7.5" r="4" fill="#2a5ab8"/><path d="M2,7Q3,2 8,2Q5,4 7,6Q3,6 2,10Z" fill="#f0a020"/></svg>
<div class="a" style="left:1477px;top:923px;width:16px;height:16px;background:#0a246a"></div>
<div class="t" style="left:1478px;top:926px;font-size:10px;color:#fff">EN</div>
<div class="a" style="left:1498px;top:920px;width:2px;height:22px;border-left:1px solid #808080;border-right:1px solid #fff"></div>
<svg class="a" style="left:1504px;top:922px" width="17" height="17"><circle cx="8.5" cy="8.5" r="7.5" fill="#2a6ad8" stroke="#1a4aa8"/><text x="8.5" y="13" font-size="12" font-weight="bold" text-anchor="middle" fill="#fff" font-family="Liberation Sans">?</text></svg>
<div class="a" style="left:1525px;top:920px;width:2px;height:22px;border-left:1px solid #808080;border-right:1px solid #fff"></div>
<svg class="a" style="left:1530px;top:922px" width="14" height="16"><rect x="4" y="1" width="7" height="4" fill="none" stroke="#000"/><rect x="2" y="3" width="7" height="4" fill="#d4d0c8" stroke="#000"/><path d="M3,11H10L6.5,14Z" fill="#000"/></svg>
<div class="a" style="left:1548px;top:919px;width:97px;height:23px;border:1px solid;border-color:#808080 #fff #fff #808080"></div>
<svg class="a" style="left:1552px;top:922px" width="17" height="17"><rect x="6" y="1" width="9" height="8" fill="#5ab0e8" stroke="#2a70b8" stroke-width="0.8"/><rect x="1" y="6" width="9" height="8" fill="#7ac0f0" stroke="#2a70b8" stroke-width="0.8"/><rect x="3" y="14" width="6" height="2" fill="#888"/></svg>
<svg class="a" style="left:1570px;top:922px" width="17" height="17"><rect x="6" y="1" width="9" height="8" fill="#5ab0e8" stroke="#2a70b8" stroke-width="0.8"/><rect x="1" y="6" width="9" height="8" fill="#7ac0f0" stroke="#2a70b8" stroke-width="0.8"/><rect x="3" y="14" width="6" height="2" fill="#888"/></svg>
<svg class="a" style="left:1588px;top:922px" width="17" height="17"><circle cx="8.5" cy="8.5" r="7.5" fill="#4a98d8" stroke="#2a5aa8"/><circle cx="8.5" cy="8.5" r="4" fill="#a040c0"/><path d="M8.5,1V16M1,8.5H16" stroke="#c0e0f8" stroke-width="1"/></svg>
<div class="t" style="left:1613px;top:925px;font-size:11px;color:#000">0:50</div>
<!--E:taskbar-->
<!-- ===== dialog ===== -->
<!--S:dialog-->
<svg width="0" height="0" style="position:absolute"><defs><linearGradient id="ginfo" x1="0" y1="0" x2="0" y2="1"><stop offset="0" stop-color="#9ad04a"/><stop offset="1" stop-color="#5a9e22"/></linearGradient></defs></svg>
<div class="a" style="left:840px;top:131px;width:750px;height:784px;background:#bccde3;border:1px solid #d9e3ef;border-right-color:#6d8fc2;border-bottom-color:#9fb6d6"></div>
<div class="a" style="left:841px;top:132px;width:748px;height:21px;background:linear-gradient(#d3dff0,#c4d4ea 45%,#b7cae3 55%,#bccee5)"></div>
<div class="a" style="left:1583px;top:153px;width:6px;height:762px;background:#c3d4ea"></div>
<svg class="a" style="left:846px;top:134px" width="14" height="13"><rect x="0.5" y="1.5" width="10" height="11" fill="#fff" stroke="#c8c8c8"/><path d="M3,10L11,1.5" stroke="#e8b020" stroke-width="3"/><path d="M3,10L4,8.5" stroke="#e06040" stroke-width="2"/></svg>
<div class="t" style="left:862px;top:137px;font-size:10.5px;color:#15428b;font-weight:bold;-webkit-text-stroke:0.25px #15428b">Edit Ethernet</div>
<div class="a" style="left:1557px;top:135px;width:11px;height:12px;background:#e6eefa;border:1px solid #fff;border-radius:2px"></div>
<div class="t" style="left:1559px;top:135px;font-size:11px;font-weight:bold;color:#3464b4">?</div>
<div class="a" style="left:1572px;top:135px;width:12px;height:12px;background:#e6eefa;border:1px solid #fff;border-radius:2px"></div>
<svg class="a" style="left:1572px;top:135px" width="12" height="12"><path d="M2.5,2.5L9.5,9.5M9.5,2.5L2.5,9.5" stroke="#3a5aa8" stroke-width="1.5"/></svg>
<div class="a" style="left:845px;top:152px;width:739px;height:24px;background:linear-gradient(#fffbff 0,#fdf9fe 75%,#f3f2f3 85%,#f0f0f0);border-left:1px solid #99bbe8;border-top:1px solid #99bbe8;border-bottom:1px solid #d0d0d0"></div>
<svg class="a" style="left:852px;top:158px" width="13" height="12"><rect x="0.5" y="0.5" width="12" height="11" rx="1.5" fill="#d8e6f8" stroke="#7aa0d8"/><path d="M3,3V10M10,3V10" stroke="#b89858" stroke-width="1" stroke-dasharray="1,1"/><rect x="5" y="2.5" width="3" height="7.5" fill="#5a8ae0"/></svg>
<div class="t" style="left:868px;top:161px;font-size:10.2px;color:#000;">Show Advanced Settings</div>
<div class="a" style="left:845px;top:176px;width:722px;height:732px;background:#fff;border-left:1px solid #99bbe8"></div>
<div class="a" style="left:1567px;top:176px;width:16px;height:732px;background:repeating-conic-gradient(#d4d0c8 0 25%,#fff 0 50%) 0 0/2px 2px"></div>
<div class="a" style="left:1567px;top:176px;width:16px;height:16px;background:#d4d0c8;border:1px solid;border-color:#d4d0c8 #404040 #404040 #d4d0c8;box-shadow:inset 1px 1px #fff,inset -1px -1px #808080"></div>
<svg class="a" style="left:1571px;top:181px" width="8" height="5"><path d="M0,4.5L4,0.5L8,4.5Z" fill="#000"/></svg>
<div class="a" style="left:1567px;top:192px;width:16px;height:562px;background:#d4d0c8;border:1px solid;border-color:#d4d0c8 #404040 #404040 #d4d0c8;box-shadow:inset 1px 1px #fff,inset -1px -1px #808080"></div>
<div class="a" style="left:1567px;top:892px;width:16px;height:16px;background:#d4d0c8;border:1px solid;border-color:#d4d0c8 #404040 #404040 #d4d0c8;box-shadow:inset 1px 1px #fff,inset -1px -1px #808080"></div>
<svg class="a" style="left:1571px;top:898px" width="8" height="5"><path d="M0,0.5L4,4.5L8,0.5Z" fill="#000"/></svg>
<div class="t" style="left:859px;top:196px;font-size:10.6px;color:#15428b;font-weight:bold;-webkit-text-stroke:0.2px #15428b">General Settings</div>
<div class="a" style="left:855px;top:208px;width:704px;height:4px;background:#e4e6f0"></div>
<div class="a" style="left:871px;top:222px;width:11px;height:12px;border:1px solid #8e8f8f;background:linear-gradient(#dcdcdc,#f4f4f4 60%,#fff)"></div>
<svg class="a" style="left:872px;top:223px" width="10" height="10"><path d="M2,4.5L4.3,8L8.5,1" stroke="#3a56b8" stroke-width="1.6" fill="none"/></svg>
<div class="t" style="left:887px;top:224px;font-size:10px;color:#000;">Enable Interface</div>
<div class="t" style="left:859px;top:256px;font-size:10.6px;color:#15428b;font-weight:bold;-webkit-text-stroke:0.2px #15428b">Interface Properties</div>
<div class="a" style="left:855px;top:268px;width:704px;height:4px;background:#e4e6f0"></div>
<div class="t" style="left:871px;top:282px;font-size:10px;color:#000;">Interface Type:</div>
<div class="a" style="left:1076px;top:276px;width:133px;height:20px;background:linear-gradient(#eeeff3 0,#fff 4px);border:1px solid #b5b8d0"></div><div class="t" style="left:1078px;top:284px;font-size:10px;color:#000;">internal</div>
<div class="a" style="left:1193px;top:277px;width:15px;height:18px;background:linear-gradient(#f4f4f6,#e6e6ea 55%,#d6d6da);border-left:1px solid #c8c8d4"></div>
<svg class="a" style="left:1196px;top:280px" width="10" height="8"><path d="M1,1.5L5,5.5L9,1.5" stroke="#1b3a8a" stroke-width="2" fill="none"/></svg>
<svg class="a" style="left:1215px;top:280px" width="13" height="13"><rect x="0.5" y="0.5" width="12" height="12" rx="2" fill="url(#ginfo)" stroke="#4f8a1f"/><rect x="5.3" y="5" width="2.4" height="5" fill="#fff"/><rect x="4.3" y="9" width="4.4" height="1.4" fill="#fff"/><rect x="5.3" y="2.3" width="2.4" height="2" fill="#fff"/></svg>
<div class="t" style="left:871px;top:304px;font-size:10px;color:#000;">Interface Name:</div>
<div class="a" style="left:1076px;top:300px;width:102px;height:19px;background:linear-gradient(#eeeff3 0,#fff 4px);border:1px solid #b5b8d0"></div><div class="t" style="left:1078px;top:307px;font-size:10px;color:#000;">Vm-3-20</div>
<div class="t" style="left:871px;top:328px;font-size:10px;color:#000;">Port:</div>
<div class="t" style="left:1077px;top:330px;font-size:10px;color:#15428b;">P3</div>
<div class="t" style="left:871px;top:352px;font-size:10px;color:#000;">Zone:</div>
<div class="a" style="left:1076px;top:346px;width:133px;height:20px;background:linear-gradient(#eeeff3 0,#fff 4px);border:1px solid #b5b8d0"></div><div class="t" style="left:1078px;top:354px;font-size:10px;color:#000;">DMZ</div>
<div class="a" style="left:1193px;top:347px;width:15px;height:18px;background:linear-gradient(#f4f4f6,#e6e6ea 55%,#d6d6da);border-left:1px solid #c8c8d4"></div>
<svg class="a" style="left:1196px;top:350px" width="10" height="8"><path d="M1,1.5L5,5.5L9,1.5" stroke="#1b3a8a" stroke-width="2" fill="none"/></svg>
<svg class="a" style="left:1215px;top:350px" width="13" height="13"><rect x="0.5" y="0.5" width="12" height="12" rx="2" fill="url(#ginfo)" stroke="#4f8a1f"/><rect x="5.3" y="5" width="2.4" height="5" fill="#fff"/><rect x="4.3" y="9" width="4.4" height="1.4" fill="#fff"/><rect x="5.3" y="2.3" width="2.4" height="2" fill="#fff"/></svg>
<div class="t" style="left:871px;top:374px;font-size:10px;color:#000;">MAC Address:</div>
<div class="t" style="left:1077px;top:376px;font-size:10.2px;color:#15428b;">E8:6C:87:0A:16:2D</div>
<div class="t" style="left:871px;top:398px;font-size:10px;color:#000;">Description:</div>
<div class="a" style="left:1076px;top:393px;width:268px;height:20px;background:linear-gradient(#eeeff3 0,#fff 4px);border:1px solid #b5b8d0"></div>
<div class="t" style="left:1350px;top:397px;font-size:10.5px;color:#000;">(Optional)</div>
<svg class="a" style="left:1074px;top:377px" width="8" height="21"><path d="M1,1H7M4,1V20M1,20H7" stroke="#000" stroke-width="1"/></svg>
<div class="t" style="left:859px;top:436px;font-size:10.6px;color:#15428b;font-weight:bold;-webkit-text-stroke:0.2px #15428b">IP Address Assignment</div>
<div class="a" style="left:855px;top:448px;width:704px;height:4px;background:#e4e6f0"></div>
<div class="t" style="left:871px;top:466px;font-size:10px;color:#000;">IP Address:</div>
<div class="a" style="left:1076px;top:460px;width:102px;height:20px;background:linear-gradient(#eeeff3 0,#fff 4px);border:1px solid #b5b8d0"></div><div class="t" style="left:1078px;top:468px;font-size:10px;color:#000;letter-spacing:-0.4px">192.168.4.1</div>
<div class="t" style="left:871px;top:488px;font-size:10px;color:#000;">Subnet Mask:</div>
<div class="a" style="left:1076px;top:484px;width:102px;height:19px;background:linear-gradient(#eeeff3 0,#fff 4px);border:1px solid #b5b8d0"></div><div class="t" style="left:1078px;top:491px;font-size:10px;color:#000;letter-spacing:-0.45px">255.255.255.0</div>
<div class="t" style="left:859px;top:527px;font-size:10.6px;color:#15428b;font-weight:bold;-webkit-text-stroke:0.2px #15428b">Interface Parameters</div>
<div class="a" style="left:855px;top:539px;width:704px;height:4px;background:#e4e6f0"></div>
<div class="t" style="left:871px;top:552px;font-size:10px;color:#000;">Egress Bandwidth:</div>
<div class="a" style="left:1076px;top:548px;width:102px;height:19px;background:linear-gradient(#eeeff3 0,#fff 4px);border:1px solid #b5b8d0"></div><div class="t" style="left:1078px;top:555px;font-size:10px;color:#000;letter-spacing:-0.4px">1048576</div>
<div class="t" style="left:1183px;top:552px;font-size:10px;color:#000;">Kbps</div>
<svg class="a" style="left:1216px;top:551px" width="13" height="13"><rect x="0.5" y="0.5" width="12" height="12" rx="2" fill="url(#ginfo)" stroke="#4f8a1f"/><rect x="5.3" y="5" width="2.4" height="5" fill="#fff"/><rect x="4.3" y="9" width="4.4" height="1.4" fill="#fff"/><rect x="5.3" y="2.3" width="2.4" height="2" fill="#fff"/></svg>
<div class="t" style="left:859px;top:591px;font-size:10.6px;color:#15428b;font-weight:bold;-webkit-text-stroke:0.2px #15428b">DHCP Setting</div>
<div class="a" style="left:855px;top:603px;width:704px;height:4px;background:#e4e6f0"></div>
<div class="t" style="left:871px;top:616px;font-size:10px;color:#000;">DHCP:</div>
<div class="a" style="left:1076px;top:612px;width:133px;height:19px;background:linear-gradient(#eeeff3 0,#fff 4px);border:1px solid #b5b8d0"></div><div class="t" style="left:1078px;top:619px;font-size:10px;color:#000;">None</div>
<div class="a" style="left:1193px;top:613px;width:15px;height:17px;background:linear-gradient(#f4f4f6,#e6e6ea 55%,#d6d6da);border-left:1px solid #c8c8d4"></div>
<svg class="a" style="left:1196px;top:616px" width="10" height="8"><path d="M1,1.5L5,5.5L9,1.5" stroke="#1b3a8a" stroke-width="2" fill="none"/></svg>
<div class="a" style="left:871px;top:640px;width:11px;height:12px;border:1px solid #8e8f8f;background:linear-gradient(#dcdcdc,#f4f4f4 60%,#fff)"></div>
<div class="t" style="left:887px;top:642px;font-size:10px;color:#000;">Enable IP/MAC Binding</div>
<div class="a" style="left:871px;top:663px;width:11px;height:12px;border:1px solid #8e8f8f;background:linear-gradient(#dcdcdc,#f4f4f4 60%,#fff)"></div>
<div class="t" style="left:887px;top:664px;font-size:10.15px;color:#000;">Enable Logs for IP/MAC Binding Violation</div>
<div class="t" style="left:871px;top:683px;font-size:9.6px;color:#000;">Static DHCP Table</div>
<div class="a" style="left:1076px;top:680px;width:438px;height:70px;background:#fff;border:1px solid #d4d0c8"></div>
<div class="a" style="left:1077px;top:681px;width:436px;height:23px;background:linear-gradient(#fffbff,#fdf9fe 70%,#f4f2f4);border-bottom:1px solid #d4d0c8"></div>
<svg class="a" style="left:1081px;top:686px" width="13" height="13"><circle cx="6.5" cy="6.5" r="6" fill="#58b048" stroke="#3f8a36" stroke-width="0.8"/><path d="M6.5,3V10M3,6.5H10" stroke="#fff" stroke-width="2.2"/></svg>
<div class="t" style="left:1100px;top:688px;font-size:10px;color:#000;">Add</div>
<svg class="a" style="left:1128px;top:685px" width="14" height="14"><rect x="0.5" y="1.5" width="12" height="10" fill="#f4f4f4" stroke="#c8c8c8"/><rect x="0.5" y="10.5" width="12" height="2" fill="#a8c8f0"/><path d="M4,10L12,2" stroke="#f0d070" stroke-width="3"/></svg>
<div class="t" style="left:1145px;top:688px;font-size:10px;color:#9a9a9a;">Edit</div>
<svg class="a" style="left:1173px;top:685px" width="12" height="14"><rect x="1.5" y="3" width="9" height="10" rx="1" fill="#f08878"/><rect x="0.5" y="1" width="11" height="2" fill="#f08878"/><rect x="4" y="0" width="4" height="1.5" fill="#f08878"/></svg>
<div class="t" style="left:1189px;top:688px;font-size:10px;color:#9a9a9a;">Remove</div>
<div class="a" style="left:1077px;top:704px;width:436px;height:22px;background:linear-gradient(#e2e8ef,#dde3ea 50%,#cfd7e0)"></div>
<div class="a" style="left:1105px;top:704px;width:111px;height:22px;background:linear-gradient(#ebf3fd,#e6effb 50%,#d9e7f8);border-left:1px solid #99bbe8;border-right:1px solid #99bbe8"></div>
<div class="a" style="left:1106px;top:723px;width:109px;height:3px;background:#78a6e0"></div>
<div class="a" style="left:1327px;top:705px;width:1px;height:20px;background:#c2cad4"></div>
<div class="a" style="left:1495px;top:705px;width:1px;height:20px;background:#c2cad4"></div>
<div class="t" style="left:1082px;top:712px;font-size:10px;color:#000;font-weight:bold">#</div>
<div class="t" style="left:1110px;top:712px;font-size:10px;color:#000;">IP Address</div>
<svg class="a" style="left:1163px;top:713px" width="7" height="4"><path d="M0,4L3.5,0L7,4Z" fill="#5a8ad8"/></svg>
<div class="t" style="left:1221px;top:712px;font-size:10px;color:#000;">MAC</div>
<div class="t" style="left:1332px;top:712px;font-size:10px;color:#000;">Description</div>
<div class="a" style="left:1077px;top:726px;width:436px;height:23px;background:linear-gradient(#fff,#fbfbfb 70%,#f4f4f4)"></div>
<svg class="a" style="left:1083px;top:732px" width="10" height="11"><path d="M1,0.5V10.5M9,0.5L3,5.5L9,10.5Z" stroke="#c2c2c2" fill="#c8c8c8"/></svg>
<svg class="a" style="left:1103px;top:732px" width="8" height="11"><path d="M7,0.5L2,5.5L7,10.5Z" fill="#c8c8c8"/></svg>
<div class="a" style="left:1121px;top:730px;width:1px;height:15px;background:#d8d8d8"></div>
<div class="a" style="left:1201px;top:730px;width:1px;height:15px;background:#d8d8d8"></div>
<div class="a" style="left:1247px;top:730px;width:1px;height:15px;background:#d8d8d8"></div>
<div class="t" style="left:1125px;top:734px;font-size:10px;color:#000;">Page</div>
<div class="a" style="left:1153px;top:730px;width:21px;height:16px;background:#fff;border:1px solid #c8c8c8;border-left:2px solid #404040;border-top:2px solid #404040"></div>
<div class="t" style="left:1155px;top:734px;font-size:10px;color:#000;">1</div>
<div class="t" style="left:1178px;top:734px;font-size:10px;color:#000;">of 1</div>
<svg class="a" style="left:1211px;top:732px" width="8" height="11"><path d="M1,0.5L6,5.5L1,10.5Z" fill="#c8c8c8"/></svg>
<svg class="a" style="left:1229px;top:732px" width="10" height="11"><path d="M9,0.5V10.5M1,0.5L7,5.5L1,10.5Z" stroke="#c2c2c2" fill="#c8c8c8"/></svg>
<div class="t" style="left:1252px;top:734px;font-size:10px;color:#000;">Show</div>
<div class="a" style="left:1281px;top:729px;width:45px;height:18px;background:linear-gradient(#eeeff3 0,#fff 4px);border:1px solid #b5b8d0"></div><div class="t" style="left:1283px;top:736px;font-size:10px;color:#000;">50</div>
<div class="a" style="left:1310px;top:730px;width:15px;height:16px;background:linear-gradient(#f4f4f6,#e6e6ea 55%,#d6d6da);border-left:1px solid #c8c8d4"></div>
<svg class="a" style="left:1313px;top:733px" width="10" height="8"><path d="M1,1.5L5,5.5L9,1.5" stroke="#1b3a8a" stroke-width="2" fill="none"/></svg>
<div class="t" style="left:1327px;top:734px;font-size:10px;color:#000;">items</div>
<div class="t" style="left:1424px;top:734px;font-size:10px;color:#444;">No data to display</div>
<div class="t" style="left:859px;top:770px;font-size:10.6px;color:#15428b;font-weight:bold;-webkit-text-stroke:0.2px #15428b">RIP Setting</div>
<div class="a" style="left:855px;top:782px;width:704px;height:4px;background:#e4e6f0"></div>
<div class="a" style="left:871px;top:796px;width:11px;height:12px;border:1px solid #8e8f8f;background:linear-gradient(#dcdcdc,#f4f4f4 60%,#fff)"></div>
<div class="t" style="left:887px;top:798px;font-size:10px;color:#000;">Enable RIP</div>
<div class="t" style="left:871px;top:818px;font-size:10px;color:#000;">Direction:</div>
<div class="a" style="left:1076px;top:813px;width:80px;height:20px;background:linear-gradient(#eeeff3 0,#fff 4px);border:1px solid #b5b8d0"></div><div class="t" style="left:1078px;top:820px;font-size:10px;color:#000;">BiDir</div>
<div class="a" style="left:1140px;top:814px;width:15px;height:18px;background:linear-gradient(#f4f4f6,#e6e6ea 55%,#d6d6da);border-left:1px solid #c8c8d4"></div>
<svg class="a" style="left:1143px;top:817px" width="10" height="8"><path d="M1,1.5L5,5.5L9,1.5" stroke="#1b3a8a" stroke-width="2" fill="none"/></svg>
<div class="t" style="left:871px;top:842px;font-size:10px;color:#000;">Send Version:</div>
<div class="a" style="left:1076px;top:836px;width:80px;height:20px;background:linear-gradient(#eeeff3 0,#fff 4px);border:1px solid #b5b8d0"></div><div class="t" style="left:1078px;top:844px;font-size:10px;color:#000;">2</div>
<div class="a" style="left:1140px;top:837px;width:15px;height:18px;background:linear-gradient(#f4f4f6,#e6e6ea 55%,#d6d6da);border-left:1px solid #c8c8d4"></div>
<svg class="a" style="left:1143px;top:840px" width="10" height="8"><path d="M1,1.5L5,5.5L9,1.5" stroke="#1b3a8a" stroke-width="2" fill="none"/></svg>
<div class="t" style="left:871px;top:864px;font-size:10px;color:#000;">Receive Version:</div>
<div class="a" style="left:1076px;top:860px;width:80px;height:19px;background:linear-gradient(#eeeff3 0,#fff 4px);border:1px solid #b5b8d0"></div><div class="t" style="left:1078px;top:867px;font-size:10px;color:#000;">2</div>
<div class="a" style="left:1140px;top:861px;width:15px;height:17px;background:linear-gradient(#f4f4f6,#e6e6ea 55%,#d6d6da);border-left:1px solid #c8c8d4"></div>
<svg class="a" style="left:1143px;top:864px" width="10" height="8"><path d="M1,1.5L5,5.5L9,1.5" stroke="#1b3a8a" stroke-width="2" fill="none"/></svg>
<div class="a" style="left:871px;top:888px;width:11px;height:12px;border:1px solid #8e8f8f;background:linear-gradient(#dcdcdc,#f4f4f4 60%,#fff)"></div>
<div class="t" style="left:887px;top:890px;font-size:10px;color:#000;">V2-Broadcast</div>
<div class="t" style="left:1196px;top:128px;font-size:9.4px;color:rgba(235,240,248,.62)">Welcome admin | <span style="text-decoration:underline">Logout</span></div>
<svg class="a" style="left:1316px;top:127px" width="9" height="12"><path d="M1.5,4A3,3 0 1 1 5.5,6.5Q4.5,7 4.5,8.5" stroke="rgba(235,240,248,.62)" stroke-width="1.8" fill="none"/><rect x="3.5" y="9.5" width="2" height="2" fill="rgba(235,240,248,.62)"/></svg>
<div class="t" style="left:1327px;top:128px;font-size:9.4px;color:rgba(235,240,248,.62)">Help</div>
<svg class="a" style="left:1355px;top:127px" width="10" height="12"><path d="M1,2H9L3,9H9V11H1V9L7,2H1Z" fill="rgba(235,240,248,.62)"/></svg>
<div class="t" style="left:1366px;top:128px;font-size:9.4px;color:rgba(235,240,248,.62)">About</div>
<svg class="a" style="left:1401px;top:126px" width="11" height="13"><path d="M5.5,0.5L10.5,5H8.5V12H2.5V5H0.5Z" fill="rgba(235,240,248,.62)"/></svg>
<div class="t" style="left:1413px;top:128px;font-size:9.4px;color:rgba(235,240,248,.62)">Site Map</div>
<svg class="a" style="left:1459px;top:127px" width="12" height="12"><rect x="0.5" y="0.5" width="10" height="10" rx="1.5" fill="none" stroke="rgba(235,240,248,.62)"/><rect x="3" y="4" width="8" height="7" fill="rgba(235,240,248,.62)"/></svg>
<div class="t" style="left:1471px;top:128px;font-size:9.4px;color:rgba(235,240,248,.62)">Object Reference</div>
<svg class="a" style="left:1552px;top:126px" width="13" height="12"><rect x="0.5" y="0.5" width="11" height="10" rx="1.5" fill="none" stroke="rgba(235,240,248,.62)" stroke-width="1.2"/><path d="M1,3H11" stroke="rgba(235,240,248,.62)"/></svg>
<div class="t" style="left:1567px;top:128px;font-size:9.4px;color:rgba(235,240,248,.62)">Console</div>
<svg class="a" style="left:1608px;top:126px" width="13" height="12"><rect x="0.5" y="0.5" width="11" height="10" rx="1.5" fill="none" stroke="rgba(235,240,248,.62)" stroke-width="1.2"/><path d="M1,3H11" stroke="rgba(235,240,248,.62)"/><path d="M3,8L5,6" stroke="rgba(235,240,248,.62)"/></svg>
<div class="t" style="left:1624px;top:128px;font-size:10px;color:#c8ced8">CLI</div>
<div class="t" style="left:1328px;top:878px;font-size:20px;color:rgba(160,160,160,.75)">Activate Windows</div>
<div class="t" style="left:1328px;top:903px;font-size:15px;color:rgba(160,160,160,.75)">Go to Settings to activate Windows.</div>
<!--E:dialog-->
</body></html>
